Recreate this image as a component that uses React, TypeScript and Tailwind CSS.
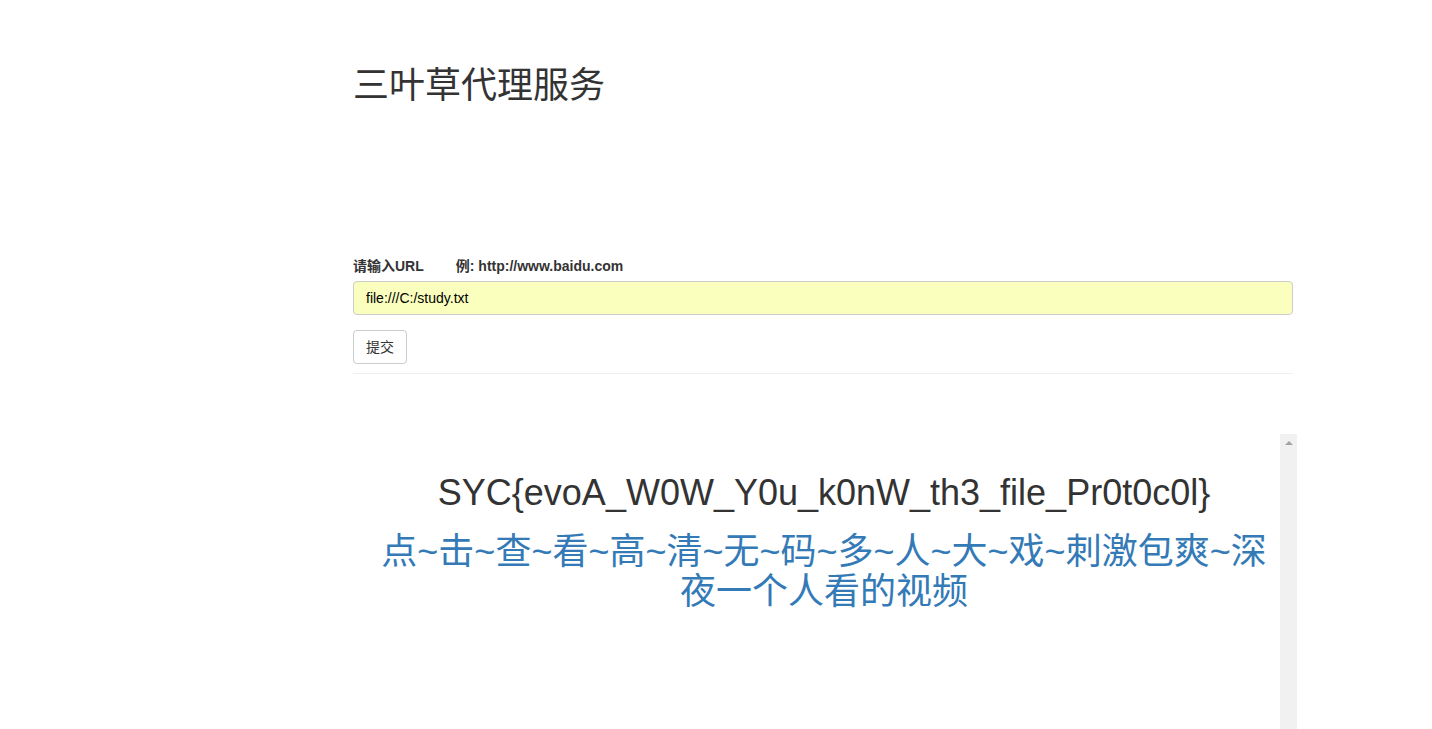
export default function App() {
  const font = {
    fontFamily: '"Liberation Sans", Arial, "Noto Sans CJK SC", sans-serif',
  };

  return (
    <div className="min-h-[729px] bg-white text-[#333] text-sm" style={font}>
      <div className="w-[940px] ml-[353px] pt-[66px]">
        {/* Title */}
        <h1 className="text-[36px] leading-[1.1] font-normal text-[#333]">三叶草代理服务</h1>

        {/* Form */}
        <div className="mt-[150px]">
          <label className="block font-bold leading-5 mb-[5px] text-[#333]">
            请输入URL<span className="ml-8">例: http://www.baidu.com</span>
          </label>
          <input
            type="text"
            defaultValue="file:///C:/study.txt"
            className="block w-full h-[34px] px-3 bg-[#faffbd] border border-[#ccc] rounded text-sm text-black outline-none"
          />
          <button className="mt-[15px] h-[34px] px-3 bg-white border border-[#ccc] rounded text-sm text-[#333]">
            提交
          </button>
          <hr className="mt-[9px] border-0 border-t border-[#eee]" />
        </div>
      </div>

      {/* Result frame */}
      <div className="ml-[353px] mt-[60px] w-[944px] h-[295px] flex">
        <div className="flex-1 pl-[15px] pt-[39px] text-center">
          <h1 className="text-[36px] leading-[1.1] font-normal text-[#333]">
            SYC{"{"}evoA_W0W_Y0u_k0nW_th3_file_Pr0t0c0l{"}"}
          </h1>
          <h1 className="mt-5 text-[36px] leading-[1.1] font-normal">
            <a href="#" className="text-[#337ab7]">
              点~击~查~看~高~清~无~码~多~人~大~戏~刺激包爽~深夜一个人看的视频
            </a>
          </h1>
        </div>
        <div className="w-[17px] bg-[#f1f1f1] flex justify-center pt-[7px]">
          <svg width="8" height="4" viewBox="0 0 8 4">
            <path d="M4 0 L8 4 L0 4 Z" fill="#a3a3a3" />
          </svg>
        </div>
      </div>
    </div>
  );
}
